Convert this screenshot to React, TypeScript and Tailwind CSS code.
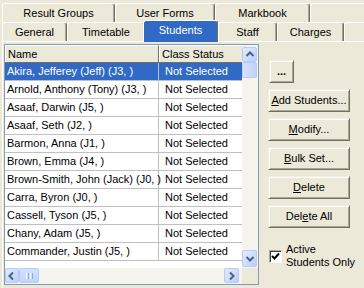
import type { ReactNode } from "react";

const students = [
  "Akira, Jefferey (Jeff) (J3, )",
  "Arnold, Anthony (Tony) (J3, )",
  "Asaaf, Darwin (J5, )",
  "Asaaf, Seth (J2, )",
  "Barmon, Anna (J1, )",
  "Brown, Emma (J4, )",
  "Brown-Smith, John (Jack) (J0, )",
  "Carra, Byron (J0, )",
  "Cassell, Tyson (J5, )",
  "Chany, Adam (J5, )",
  "Commander, Justin (J5, )",
];

/**
 * Classic tab on the property sheet strip
 */
function Tab({ label, width }: { label?: string; width: string }) {
  return (
    <div
      className={`flex h-[19px] shrink-0 items-center justify-center rounded-t-[3px] border-l border-t border-r border-white border-r-[#716f64] bg-[#ece9d8] shadow-[inset_-1px_0_0_#aca899] ${width}`}
    >
      {label}
    </div>
  );
}

function Button({ children, className = "" }: { children: ReactNode; className?: string }) {
  return (
    <div
      className={`flex h-[23px] items-center justify-center border border-[#f1efe2] border-b-[#716f64] border-r-[#716f64] bg-[#ece9d8] shadow-[inset_1px_1px_0_#ffffff,inset_-1px_-1px_0_#aca899] ${className}`}
    >
      {children}
    </div>
  );
}

function Arrow({ dir }: { dir: "up" | "down" | "left" | "right" }) {
  const pts = {
    up: "1.5,6 5,2.5 8.5,6",
    down: "1.5,3 5,6.5 8.5,3",
    left: "6,1.5 2.5,5 6,8.5",
    right: "3,1.5 6.5,5 3,8.5",
  }[dir];
  return (
    <svg width="10" height="10" viewBox="0 0 10 10">
      <polyline points={pts} fill="none" stroke="#4d6185" strokeWidth="2" />
    </svg>
  );
}

function ScrollButton({ dir, className }: { dir: "up" | "down" | "left" | "right"; className: string }) {
  return (
    <div
      className={`flex shrink-0 items-center justify-center rounded-[2px] border border-[#b7cbf5] bg-gradient-to-br from-[#e3ecfe] to-[#bccff8] ${className}`}
    >
      <Arrow dir={dir} />
    </div>
  );
}

function StudentList() {
  return (
    <div className="flex h-[241px] w-[255px] shrink-0 flex-col border border-[#7f9db9] bg-white">
      <div className="flex h-[223px]">
        <div className="flex w-[237px] flex-col overflow-hidden">
          <div className="flex h-[18px] shrink-0 border-b border-[#716f64] bg-[#ece9d8]">
            <div className="flex w-[154px] items-center border-r border-t border-l border-white border-r-[#716f64] pl-[2px]">
              Name
            </div>
            <div className="flex flex-1 items-center border-l border-t border-white pl-[2px]">
              Class Status
            </div>
          </div>
          {students.map((name, i) => (
            <div
              key={name}
              className={`flex h-[18px] shrink-0 border-b border-[#c0c0c0] ${i === 0 ? "bg-[#316ac5] text-white" : ""}`}
            >
              <div className="flex w-[154px] items-center whitespace-nowrap border-r border-[#c0c0c0] pl-[2px]">
                {name}
              </div>
              <div className="flex flex-1 items-center whitespace-nowrap pl-[6px]">
                Not Selected
              </div>
            </div>
          ))}
        </div>
        <div className="flex w-[16px] flex-col bg-[#f5f4ee] pb-[1px] pr-[1px] pt-[2px]">
          <ScrollButton dir="up" className="h-[15px]" />
          <div className="h-[16px] rounded-[2px] border border-[#b7cbf5] bg-gradient-to-r from-[#d5e1fd] to-[#c2d3fa]" />
          <div className="flex-1" />
          <ScrollButton dir="down" className="h-[17px]" />
        </div>
      </div>
      <div className="flex h-[16px]">
        <div className="flex w-[237px] bg-[#f5f4ee] pb-[1px] pr-[3px]">
          <ScrollButton dir="left" className="w-[14px]" />
          <div className="flex w-[20px] items-center justify-center gap-[1px] rounded-[2px] border border-[#b7cbf5] bg-gradient-to-b from-[#d5e1fd] to-[#c2d3fa]">
            <span className="h-[6px] w-[1px] bg-white" />
            <span className="h-[6px] w-[1px] bg-[#8caae6]" />
            <span className="h-[6px] w-[1px] bg-white" />
            <span className="h-[6px] w-[1px] bg-[#8caae6]" />
          </div>
          <div className="flex-1" />
          <ScrollButton dir="right" className="w-[15px]" />
        </div>
        <div className="w-[16px] bg-[#ece9d8]" />
      </div>
    </div>
  );
}

export default function App() {
  return (
    <div className="h-[288px] w-[364px] overflow-hidden bg-[#ece9d8] pt-[3px] font-['Liberation_Sans',Arial,sans-serif] text-[11px] leading-none text-black">
      <div className="flex pl-[2px]">
        <Tab label="Result Groups" width="w-[113px]" />
        <Tab label="User Forms" width="w-[100px]" />
        <Tab label="Markbook" width="w-[95px]" />
        <Tab width="w-[70px]" />
      </div>
      <div className="flex h-[19px] items-start pl-[2px]">
        <Tab label="General" width="w-[65px]" />
        <Tab label="Timetable" width="w-[78px]" />
        <div className="relative z-10 -ml-[2px] -mt-[2px] flex h-[22px] w-[75px] shrink-0 items-center justify-center rounded-t-[3px] border-l border-t border-r border-white border-r-[#716f64] bg-[#316ac5] pb-[2px] text-white">
          Students
        </div>
        <Tab label="Staff" width="w-[59px]" />
        <Tab label="Charges" width="w-[67px]" />
        <Tab width="w-[40px]" />
      </div>
      <div className="ml-[2px] flex h-[260px] border-l border-t border-white pl-[1px] pt-[2px]">
        <StudentList />
        <div className="ml-[9px] flex w-[82px] flex-col pt-[16px]">
          <Button className="ml-[1px] w-[25px] font-bold">...</Button>
          <div className="mt-[6px] flex flex-col gap-[6px]">
            <Button>
              <span className="underline">A</span>dd Students...
            </Button>
            <Button>
              <span className="underline">M</span>odify...
            </Button>
            <Button>
              <span className="underline">B</span>ulk Set...
            </Button>
            <Button>
              <span className="underline">D</span>elete
            </Button>
            <Button>
              Del<span className="underline">e</span>te All
            </Button>
          </div>
          <div className="mt-[15px] flex items-center">
            <div className="ml-[1px] flex h-[13px] w-[13px] shrink-0 items-center justify-center border border-[#aca899] border-b-white border-r-white bg-white shadow-[inset_1px_1px_0_#404040]">
              <svg width="9" height="9" viewBox="0 0 9 9">
                <polyline points="1,4 3.5,6.5 8,1.5" fill="none" stroke="#000" strokeWidth="2" />
              </svg>
            </div>
            <div className="ml-[4px] whitespace-nowrap leading-[13px]">
              Active
              <br />
              Students Only
            </div>
          </div>
        </div>
      </div>
    </div>
  );
}
